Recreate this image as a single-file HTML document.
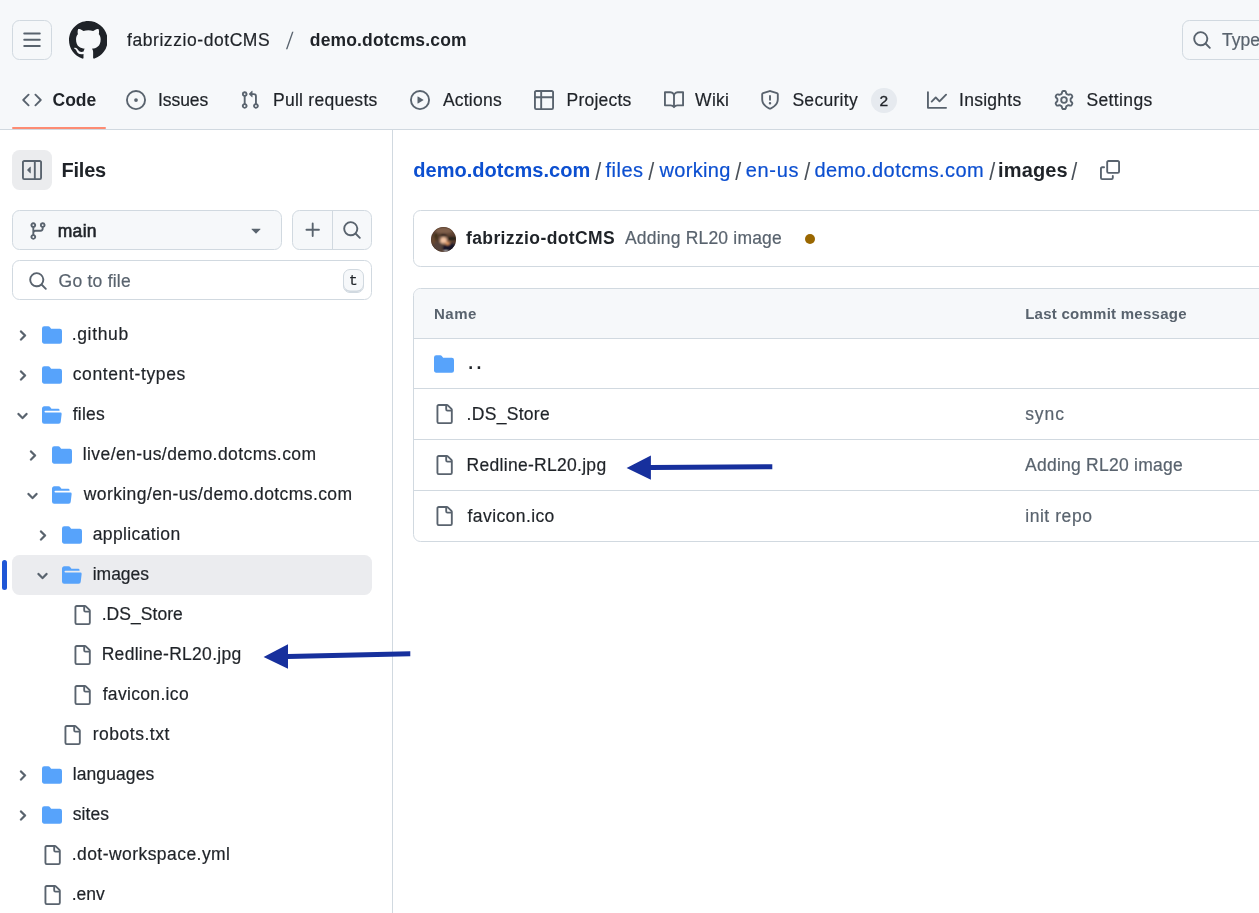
<!DOCTYPE html>
<html lang="en"><head><meta charset="utf-8"><title>demo.dotcms.com/files/working/en-us/demo.dotcms.com/images at main</title>
<style>
html,body{margin:0;padding:0;background:#fff;}
body{width:1259px;height:913px;position:relative;overflow:hidden;font-family:"Liberation Sans",sans-serif;-webkit-font-smoothing:antialiased;}
#root{position:absolute;left:0;top:0;width:1259px;height:913px;will-change:transform}
.b,.i,.t{position:absolute;display:block}
.t{white-space:nowrap;-webkit-text-stroke:0.2px currentColor}
</style></head><body><div id="root">
<div class="b" style="left:0px;top:0px;width:1259px;height:130px;background:#f6f8fa;border-bottom:1px solid #d1d9e0;box-sizing:border-box"></div>
<div class="b" style="left:12px;top:20px;width:40px;height:40px;border:1px solid #d1d9e0;border-radius:7.5px;box-sizing:border-box"></div>
<svg class="i" style="left:22px;top:30px" width="20" height="20" viewBox="0 0 16 16" fill="#59636e"><path d="M1 2.75A.75.75 0 0 1 1.75 2h12.5a.75.75 0 0 1 0 1.5H1.75A.75.75 0 0 1 1 2.75Zm0 5A.75.75 0 0 1 1.75 7h12.5a.75.75 0 0 1 0 1.5H1.75A.75.75 0 0 1 1 7.75ZM1.75 12h12.5a.75.75 0 0 1 0 1.5H1.75a.75.75 0 0 1 0-1.5Z"/></svg>
<svg class="i" style="left:68.6px;top:20.8px" width="38.6" height="38.6" viewBox="0 0 16 16" fill="#1f2328"><path d="M8 0c4.42 0 8 3.58 8 8a8.013 8.013 0 0 1-5.45 7.59c-.4.08-.55-.17-.55-.38 0-.27.01-1.13.01-2.2 0-.75-.25-1.23-.54-1.48 1.78-.2 3.65-.88 3.65-3.95 0-.88-.31-1.59-.82-2.15.08-.2.36-1.02-.08-2.12 0 0-.67-.22-2.2.82-.64-.18-1.32-.27-2-.27-.68 0-1.36.09-2 .27-1.53-1.03-2.2-.82-2.2-.82-.44 1.1-.16 1.92-.08 2.12-.51.56-.82 1.28-.82 2.15 0 3.06 1.86 3.75 3.64 3.95-.23.2-.44.55-.51 1.07-.46.21-1.61.55-2.33-.66-.15-.24-.6-.83-1.23-.82-.67.01-.27.38.01.53.34.19.73.9.82 1.13.16.45.68 1.31 2.69.94 0 .67.01 1.3.01 1.49 0 .21-.15.45-.55.38A7.995 7.995 0 0 1 0 8c0-4.42 3.58-8 8-8Z"/></svg>
<span id="t1" class="t" style="left:127.00px;top:30.00px;font-size:17.5px;line-height:20px;color:#1f2328;letter-spacing:0.564px;">fabrizzio-dotCMS</span>
<span id="t2" class="t" style="left:286.00px;top:30.00px;font-size:17.5px;line-height:20px;color:#59636e;-webkit-text-stroke:0;transform-origin:0 3.1px;transform:translate(2.7px,-2px) skewX(-8.4deg) scale(1.02,1.354);">/</span>
<span id="t3" class="t" style="left:309.80px;top:30.00px;font-size:17.5px;line-height:20px;color:#1f2328;font-weight:700;-webkit-text-stroke:0;letter-spacing:0.153px;">demo.dotcms.com</span>
<div class="b" style="left:1182px;top:20px;width:90px;height:40px;border:1px solid #d1d9e0;border-radius:7.5px;box-sizing:border-box"></div>
<svg class="i" style="left:1192px;top:30px" width="20" height="20" viewBox="0 0 16 16" fill="#59636e"><path d="M10.68 11.74a6 6 0 0 1-7.922-8.982 6 6 0 0 1 8.982 7.922l3.04 3.04a.749.749 0 0 1-.326 1.275.749.749 0 0 1-.734-.215ZM11.5 7a4.499 4.499 0 1 0-8.997 0A4.499 4.499 0 0 0 11.5 7Z"/></svg>
<span id="t4" class="t" style="left:1222.00px;top:30.00px;font-size:17.5px;line-height:20px;color:#59636e;">Type</span>
<div class="b" style="left:12px;top:126.5px;width:94px;height:2.5px;background:#fd8c73;border-radius:3px"></div>
<svg class="i" style="left:22px;top:90px" width="20" height="20" viewBox="0 0 16 16" fill="#59636e"><path d="m11.28 3.22 4.25 4.25a.75.75 0 0 1 0 1.06l-4.25 4.25a.749.749 0 0 1-1.275-.326.749.749 0 0 1 .215-.734L13.94 8l-3.72-3.72a.749.749 0 0 1 .326-1.275.749.749 0 0 1 .734.215Zm-6.56 0a.751.751 0 0 1 1.042.018.751.751 0 0 1 .018 1.042L2.06 8l3.72 3.72a.749.749 0 0 1-.326 1.275.749.749 0 0 1-.734-.215L.47 8.53a.75.75 0 0 1 0-1.06Z"/></svg>
<span id="t5" class="t" style="left:52.60px;top:90.00px;font-size:17.5px;line-height:20px;color:#1f2328;font-weight:700;-webkit-text-stroke:0;letter-spacing:-0.039px;">Code</span>
<svg class="i" style="left:126px;top:90px" width="20" height="20" viewBox="0 0 16 16" fill="#59636e"><path d="M8 9.5a1.5 1.5 0 1 0 0-3 1.5 1.5 0 0 0 0 3ZM8 0a8 8 0 1 1 0 16A8 8 0 0 1 8 0ZM1.5 8a6.5 6.5 0 1 0 13 0 6.5 6.5 0 0 0-13 0Z"/></svg>
<span id="t6" class="t" style="left:158.00px;top:90.00px;font-size:17.5px;line-height:20px;color:#1f2328;letter-spacing:-0.065px;">Issues</span>
<svg class="i" style="left:240px;top:90px" width="20" height="20" viewBox="0 0 16 16" fill="#59636e"><path d="M1.5 3.25a2.25 2.25 0 1 1 3 2.122v5.256a2.251 2.251 0 1 1-1.5 0V5.372A2.25 2.25 0 0 1 1.5 3.25Zm5.677-.177L9.573.677A.25.25 0 0 1 10 .854V2.5h1A2.5 2.5 0 0 1 13.5 5v5.628a2.251 2.251 0 1 1-1.5 0V5a1 1 0 0 0-1-1h-1v1.646a.25.25 0 0 1-.427.177L7.177 3.427a.25.25 0 0 1 0-.354ZM3.75 2.5a.75.75 0 1 0 0 1.5.75.75 0 0 0 0-1.5Zm0 9.5a.75.75 0 1 0 0 1.5.75.75 0 0 0 0-1.5Zm8.25.75a.75.75 0 1 0 1.5 0 .75.75 0 0 0-1.5 0Z"/></svg>
<span id="t7" class="t" style="left:273.00px;top:90.00px;font-size:17.5px;line-height:20px;color:#1f2328;letter-spacing:0.257px;">Pull requests</span>
<svg class="i" style="left:410px;top:90px" width="20" height="20" viewBox="0 0 16 16" fill="#59636e"><path d="M8 0a8 8 0 1 1 0 16A8 8 0 0 1 8 0ZM1.5 8a6.5 6.5 0 1 0 13 0 6.5 6.5 0 0 0-13 0Zm4.879-2.773 4.264 2.559a.25.25 0 0 1 0 .428l-4.264 2.559A.25.25 0 0 1 6 10.559V5.442a.25.25 0 0 1 .379-.215Z"/></svg>
<span id="t8" class="t" style="left:442.90px;top:90.00px;font-size:17.5px;line-height:20px;color:#1f2328;letter-spacing:0.227px;">Actions</span>
<svg class="i" style="left:534px;top:90px" width="20" height="20" viewBox="0 0 16 16" fill="#59636e"><path d="M0 1.75C0 .784.784 0 1.75 0h12.5C15.216 0 16 .784 16 1.75v12.5A1.75 1.75 0 0 1 14.25 16H1.75A1.75 1.75 0 0 1 0 14.25ZM6.5 6.5v8h7.75a.25.25 0 0 0 .25-.25V6.5Zm8-1.5V1.75a.25.25 0 0 0-.25-.25H6.5V5Zm-13 1.5v7.75c0 .138.112.25.25.25H5v-8ZM5 5V1.5H1.75a.25.25 0 0 0-.25.25V5Z"/></svg>
<span id="t9" class="t" style="left:566.60px;top:90.00px;font-size:17.5px;line-height:20px;color:#1f2328;letter-spacing:0.205px;">Projects</span>
<svg class="i" style="left:664px;top:90px" width="20" height="20" viewBox="0 0 16 16" fill="#59636e"><path d="M0 1.75A.75.75 0 0 1 .75 1h4.253c1.227 0 2.317.59 3 1.501A3.743 3.743 0 0 1 11.006 1h4.245a.75.75 0 0 1 .75.75v10.5a.75.75 0 0 1-.75.75h-4.507a2.25 2.25 0 0 0-1.591.659l-.622.621a.75.75 0 0 1-1.06 0l-.622-.621A2.25 2.25 0 0 0 5.258 13H.75a.75.75 0 0 1-.75-.75Zm7.251 10.324.004-5.073-.002-2.253A2.25 2.25 0 0 0 5.003 2.5H1.5v9h3.757a3.75 3.75 0 0 1 1.994.574ZM8.755 4.75l-.004 7.322a3.752 3.752 0 0 1 1.992-.572H14.5v-9h-3.495a2.25 2.25 0 0 0-2.25 2.25Z"/></svg>
<span id="t10" class="t" style="left:695.10px;top:90.00px;font-size:17.5px;line-height:20px;color:#1f2328;letter-spacing:0.282px;">Wiki</span>
<svg class="i" style="left:760px;top:90px" width="20" height="20" viewBox="0 0 16 16" fill="#59636e"><path d="M7.467.133a1.748 1.748 0 0 1 1.066 0l5.25 1.68A1.75 1.75 0 0 1 15 3.48V7c0 1.566-.32 3.182-1.303 4.682-.983 1.498-2.585 2.813-5.032 3.855a1.697 1.697 0 0 1-1.33 0c-2.447-1.042-4.049-2.357-5.032-3.855C1.32 10.182 1 8.566 1 7V3.48a1.75 1.75 0 0 1 1.217-1.667Zm.61 1.429a.25.25 0 0 0-.153 0l-5.25 1.68a.25.25 0 0 0-.174.238V7c0 1.358.275 2.666 1.057 3.86.784 1.194 2.121 2.34 4.366 3.297a.196.196 0 0 0 .154 0c2.245-.956 3.582-2.104 4.366-3.298C13.225 9.666 13.5 8.36 13.5 7V3.48a.251.251 0 0 0-.174-.237l-5.25-1.68ZM8.75 4.75v3a.75.75 0 0 1-1.5 0v-3a.75.75 0 0 1 1.5 0ZM9 10.5a1 1 0 1 1-2 0 1 1 0 0 1 2 0Z"/></svg>
<span id="t11" class="t" style="left:792.40px;top:90.00px;font-size:17.5px;line-height:20px;color:#1f2328;letter-spacing:0.291px;">Security</span>
<div class="b" style="left:871px;top:88px;width:25.5px;height:24.5px;background:#e6eaef;border-radius:13px"></div>
<span id="t12" class="t" style="left:879.50px;top:90.50px;font-size:15.5px;line-height:20px;color:#1f2328;-webkit-text-stroke:0.35px currentColor;">2</span>
<svg class="i" style="left:927px;top:90px" width="20" height="20" viewBox="0 0 16 16" fill="#59636e"><path d="M1.5 1.75V13.5h13.75a.75.75 0 0 1 0 1.5H.75a.75.75 0 0 1-.75-.75V1.75a.75.75 0 0 1 1.5 0Zm14.28 2.53-5.25 5.25a.75.75 0 0 1-1.06 0L7 7.06 4.28 9.78a.751.751 0 0 1-1.042-.018.751.751 0 0 1-.018-1.042l3.25-3.25a.75.75 0 0 1 1.06 0L10 7.94l4.72-4.72a.751.751 0 0 1 1.042.018.751.751 0 0 1 .018 1.042Z"/></svg>
<span id="t13" class="t" style="left:959.00px;top:90.00px;font-size:17.5px;line-height:20px;color:#1f2328;letter-spacing:0.278px;">Insights</span>
<svg class="i" style="left:1054px;top:90px" width="20" height="20" viewBox="0 0 16 16" fill="#59636e"><path d="M8 0a8.2 8.2 0 0 1 .701.031C9.444.095 9.99.645 10.16 1.29l.288 1.107c.018.066.079.158.212.224.231.114.454.243.668.386.123.082.233.09.299.071l1.103-.303c.644-.176 1.392.021 1.82.63.27.385.506.792.704 1.218.315.675.111 1.422-.364 1.891l-.814.806c-.049.048-.098.147-.088.294.016.257.016.515 0 .772-.01.147.038.246.088.294l.814.806c.475.469.679 1.216.364 1.891a7.977 7.977 0 0 1-.704 1.217c-.428.61-1.176.807-1.82.63l-1.102-.302c-.067-.019-.177-.011-.3.071a5.909 5.909 0 0 1-.668.386c-.133.066-.194.158-.211.224l-.29 1.106c-.168.646-.715 1.196-1.458 1.26a8.006 8.006 0 0 1-1.402 0c-.743-.064-1.289-.614-1.458-1.26l-.289-1.106c-.018-.066-.079-.158-.212-.224a5.738 5.738 0 0 1-.668-.386c-.123-.082-.233-.09-.299-.071l-1.103.303c-.644.176-1.392-.021-1.82-.63a8.12 8.12 0 0 1-.704-1.218c-.315-.675-.111-1.422.363-1.891l.815-.806c.05-.048.098-.147.088-.294a6.214 6.214 0 0 1 0-.772c.01-.147-.038-.246-.088-.294l-.815-.806C.635 6.045.431 5.298.746 4.623a7.920 7.920 0 0 1 .704-1.217c.428-.61 1.176-.807 1.820-.63l1.102.302c.067.019.177.011.3-.071.214-.143.437-.272.668-.386.133-.066.194-.158.211-.224l.29-1.106C6.009.645 6.556.095 7.299.03 7.530.01 7.764 0 8 0Zm-.571 1.525c-.036.003-.108.036-.137.146l-.289 1.105c-.147.561-.549.967-.998 1.189-.173.086-.34.183-.5.29-.417.278-.97.423-1.529.27l-1.103-.303c-.109-.03-.175.016-.195.045-.22.312-.412.644-.573.99-.014.031-.021.11.059.19l.815.806c.411.406.562.957.53 1.456a4.709 4.709 0 0 0 0 .582c.032.499-.119 1.05-.53 1.456l-.815.806c-.081.08-.073.159-.059.19.162.346.353.677.573.989.02.03.085.076.195.046l1.102-.303c.56-.153 1.113-.008 1.53.27.161.107.328.204.501.29.447.222.85.629.997 1.189l.289 1.105c.029.109.101.143.137.146a6.6 6.6 0 0 0 1.142 0c.036-.003.108-.036.137-.146l.289-1.105c.147-.561.549-.967.998-1.189.173-.086.34-.183.5-.29.417-.278.97-.423 1.529-.27l1.103.303c.109.029.175-.016.195-.045.22-.313.411-.644.573-.99.014-.031.021-.11-.059-.19l-.815-.806c-.411-.406-.562-.957-.53-1.456a4.709 4.709 0 0 0 0-.582c-.032-.499.119-1.05.53-1.456l.815-.806c.081-.08.073-.159.059-.19a6.464 6.464 0 0 0-.573-.989c-.02-.03-.085-.076-.195-.046l-1.102.303c-.56.153-1.113.008-1.53-.27a4.440 4.440 0 0 0-.501-.29c-.447-.222-.85-.629-.997-1.189l-.289-1.105c-.029-.11-.101-.143-.137-.146a6.6 6.6 0 0 0-1.142 0ZM11 8a3 3 0 1 1-6 0 3 3 0 0 1 6 0ZM9.5 8a1.5 1.5 0 1 0-3.001.001A1.5 1.5 0 0 0 9.500 8Z"/></svg>
<span id="t14" class="t" style="left:1086.40px;top:90.00px;font-size:17.5px;line-height:20px;color:#1f2328;letter-spacing:0.375px;">Settings</span>
<div class="b" style="left:392px;top:130px;width:1px;height:800px;background:#d1d9e0"></div>
<div class="b" style="left:12px;top:150px;width:40px;height:40px;background:#ebecee;border-radius:7.5px"></div>
<svg class="i" style="left:22px;top:160px" width="20" height="20" viewBox="0 0 16 16" fill="#59636e"><path d="m4.177 7.823 2.396-2.396A.25.25 0 0 1 7 5.604v4.792a.25.25 0 0 1-.427.177L4.177 8.177a.25.25 0 0 1 0-.354ZM0 1.75C0 .784.784 0 1.75 0h12.5C15.216 0 16 .784 16 1.75v12.5A1.75 1.75 0 0 1 14.25 16H1.75A1.75 1.75 0 0 1 0 14.250Zm1.750-.250a.250.250 0 0 0-.250.250v12.500c0 .138.112.250.250.250H9.500v-13Zm12.500 13a.250.250 0 0 0 .250-.250V1.750a.250.250 0 0 0-.250-.250H11v13Z"/></svg>
<span id="t15" class="t" style="left:61.60px;top:158.00px;font-size:20px;line-height:24px;color:#1f2328;font-weight:700;-webkit-text-stroke:0;letter-spacing:-0.263px;">Files</span>
<div class="b" style="left:12px;top:210px;width:270px;height:40px;background:#f6f8fa;border:1px solid #d1d9e0;border-radius:7.5px;box-sizing:border-box"></div>
<svg class="i" style="left:28px;top:221px" width="20" height="20" viewBox="0 0 16 16" fill="#59636e"><path d="M9.5 3.25a2.25 2.25 0 1 1 3 2.122V6A2.5 2.5 0 0 1 10 8.5H6a1 1 0 0 0-1 1v1.128a2.251 2.251 0 1 1-1.5 0V5.372a2.25 2.25 0 1 1 1.5 0v1.836A2.493 2.493 0 0 1 6 7h4a1 1 0 0 0 1-1v-.628A2.25 2.25 0 0 1 9.5 3.25Zm-6 0a.75.75 0 1 0 1.5 0 .75.75 0 0 0-1.5 0Zm8.25-.75a.75.75 0 1 0 0 1.5.75.75 0 0 0 0-1.5ZM4.25 12a.75.75 0 1 0 0 1.5.75.75 0 0 0 0-1.5Z"/></svg>
<span id="t16" class="t" style="left:57.70px;top:221.00px;font-size:17.5px;line-height:20px;color:#1f2328;letter-spacing:0.314px;-webkit-text-stroke:0.6px #1f2328;">main</span>
<svg class="i" style="left:246px;top:220.3px" width="20" height="20" viewBox="0 0 16 16" fill="#59636e"><path d="m4.427 7.427 3.396 3.396a.25.25 0 0 0 .354 0l3.396-3.396A.25.25 0 0 0 11.396 7H4.604a.25.25 0 0 0-.177.427Z"/></svg>
<div class="b" style="left:292px;top:210px;width:80px;height:40px;background:#f6f8fa;border:1px solid #d1d9e0;border-radius:7.5px;box-sizing:border-box"></div>
<div class="b" style="left:332px;top:211px;width:1px;height:38px;background:#d1d9e0"></div>
<svg class="i" style="left:302.5px;top:220px" width="20" height="20" viewBox="0 0 16 16" fill="#59636e"><path d="M7.75 2a.75.75 0 0 1 .75.75V7h4.25a.75.75 0 0 1 0 1.5H8.5v4.25a.75.75 0 0 1-1.5 0V8.5H2.75a.75.75 0 0 1 0-1.5H7V2.75A.75.75 0 0 1 7.75 2Z"/></svg>
<svg class="i" style="left:342px;top:220px" width="20" height="20" viewBox="0 0 16 16" fill="#59636e"><path d="M10.68 11.74a6 6 0 0 1-7.922-8.982 6 6 0 0 1 8.982 7.922l3.04 3.04a.749.749 0 0 1-.326 1.275.749.749 0 0 1-.734-.215ZM11.5 7a4.499 4.499 0 1 0-8.997 0A4.499 4.499 0 0 0 11.5 7Z"/></svg>
<div class="b" style="left:12px;top:260px;width:360px;height:40px;background:#fff;border:1px solid #d1d9e0;border-radius:7.5px;box-sizing:border-box"></div>
<svg class="i" style="left:28px;top:271px" width="20" height="20" viewBox="0 0 16 16" fill="#59636e"><path d="M10.68 11.74a6 6 0 0 1-7.922-8.982 6 6 0 0 1 8.982 7.922l3.04 3.04a.749.749 0 0 1-.326 1.275.749.749 0 0 1-.734-.215ZM11.5 7a4.499 4.499 0 1 0-8.997 0A4.499 4.499 0 0 0 11.5 7Z"/></svg>
<span id="t17" class="t" style="left:58.60px;top:271.00px;font-size:17.5px;line-height:20px;color:#59636e;letter-spacing:0.233px;">Go to file</span>
<div class="b" style="left:343px;top:269px;width:20.5px;height:23.5px;background:#f6f8fa;border:1px solid #d1d9e0;border-radius:7px;box-sizing:border-box;box-shadow:inset 0 -1.5px 0 #d1d9e0"></div>
<span id="t18" class="t" style="left:348.80px;top:272.00px;font-size:15px;line-height:20px;color:#1f2328;font-family:'Liberation Mono',monospace;">t</span>
<svg class="i" style="left:15px;top:327.5px" width="15" height="15" viewBox="0 0 12 12" fill="#59636e" stroke="#59636e" stroke-width="0.25"><path d="M4.7 10c-.2 0-.4-.1-.5-.2-.3-.3-.3-.8 0-1.1L6.9 6 4.2 3.300c-.3-.3-.3-.8 0-1.100.3-.3.8-.3 1.100 0l3.300 3.200c.3.3.3.8 0 1.100L5.300 9.700c-.2.200-.4.300-.6.300Z"/></svg>
<svg class="i" style="left:42px;top:325px" width="20" height="20" viewBox="0 0 16 16" fill="#57a3fb"><path d="M1.75 1A1.75 1.75 0 0 0 0 2.75v10.5C0 14.216.784 15 1.75 15h12.5A1.75 1.75 0 0 0 16 13.25v-8.5A1.75 1.75 0 0 0 14.25 3H7.5a.25.25 0 0 1-.2-.1l-.9-1.2C6.07 1.26 5.55 1 5 1H1.75Z"/></svg>
<span id="t19" class="t" style="left:71.70px;top:324.00px;font-size:17.5px;line-height:20px;color:#1f2328;letter-spacing:0.665px;">.github</span>
<svg class="i" style="left:15px;top:367.5px" width="15" height="15" viewBox="0 0 12 12" fill="#59636e" stroke="#59636e" stroke-width="0.25"><path d="M4.7 10c-.2 0-.4-.1-.5-.2-.3-.3-.3-.8 0-1.1L6.9 6 4.2 3.300c-.3-.3-.3-.8 0-1.100.3-.3.8-.3 1.100 0l3.300 3.200c.3.3.3.8 0 1.100L5.300 9.700c-.2.200-.4.300-.6.300Z"/></svg>
<svg class="i" style="left:42px;top:365px" width="20" height="20" viewBox="0 0 16 16" fill="#57a3fb"><path d="M1.75 1A1.75 1.75 0 0 0 0 2.75v10.5C0 14.216.784 15 1.75 15h12.5A1.75 1.75 0 0 0 16 13.25v-8.5A1.75 1.75 0 0 0 14.25 3H7.5a.25.25 0 0 1-.2-.1l-.9-1.2C6.07 1.26 5.55 1 5 1H1.75Z"/></svg>
<span id="t20" class="t" style="left:72.70px;top:364.00px;font-size:17.5px;line-height:20px;color:#1f2328;letter-spacing:0.624px;">content-types</span>
<svg class="i" style="left:15px;top:407.5px" width="15" height="15" viewBox="0 0 12 12" fill="#59636e" stroke="#59636e" stroke-width="0.25"><path d="M6 8.825c-.2 0-.4-.1-.5-.2l-3.300-3.300c-.3-.3-.3-.8 0-1.100.3-.3.8-.3 1.100 0l2.700 2.700 2.700-2.700c.3-.3.8-.3 1.100 0 .3.300.3.800 0 1.100l-3.200 3.200c-.2.200-.4.300-.6.300Z"/></svg>
<svg class="i" style="left:42px;top:405px" width="20" height="20" viewBox="0 0 16 16" fill="#57a3fb"><path d="M.513 1.513A1.75 1.75 0 0 1 1.75 1h3.5c.55 0 1.07.26 1.4.7l.9 1.2a.25.25 0 0 0 .2.1H13a1 1 0 0 1 1 1v.5H2.75a.75.75 0 0 0 0 1.5h11.978a1 1 0 0 1 .994 1.117L15 13.25A1.75 1.75 0 0 1 13.25 15H1.75A1.75 1.75 0 0 1 0 13.25V2.75c0-.464.184-.91.513-1.237Z"/></svg>
<span id="t21" class="t" style="left:72.70px;top:404.00px;font-size:17.5px;line-height:20px;color:#1f2328;letter-spacing:0.257px;">files</span>
<svg class="i" style="left:25px;top:447.5px" width="15" height="15" viewBox="0 0 12 12" fill="#59636e" stroke="#59636e" stroke-width="0.25"><path d="M4.7 10c-.2 0-.4-.1-.5-.2-.3-.3-.3-.8 0-1.1L6.9 6 4.2 3.300c-.3-.3-.3-.8 0-1.100.3-.3.8-.3 1.100 0l3.300 3.200c.3.3.3.8 0 1.100L5.300 9.700c-.2.200-.4.300-.6.300Z"/></svg>
<svg class="i" style="left:52px;top:445px" width="20" height="20" viewBox="0 0 16 16" fill="#57a3fb"><path d="M1.75 1A1.75 1.75 0 0 0 0 2.75v10.5C0 14.216.784 15 1.75 15h12.5A1.75 1.75 0 0 0 16 13.25v-8.5A1.75 1.75 0 0 0 14.25 3H7.5a.25.25 0 0 1-.2-.1l-.9-1.2C6.07 1.26 5.55 1 5 1H1.75Z"/></svg>
<span id="t22" class="t" style="left:82.70px;top:444.00px;font-size:17.5px;line-height:20px;color:#1f2328;letter-spacing:0.426px;">live/en-us/demo.dotcms.com</span>
<svg class="i" style="left:25px;top:487.5px" width="15" height="15" viewBox="0 0 12 12" fill="#59636e" stroke="#59636e" stroke-width="0.25"><path d="M6 8.825c-.2 0-.4-.1-.5-.2l-3.300-3.300c-.3-.3-.3-.8 0-1.100.3-.3.8-.3 1.100 0l2.700 2.700 2.700-2.700c.3-.3.8-.3 1.100 0 .3.300.3.800 0 1.100l-3.200 3.200c-.2.200-.4.300-.6.300Z"/></svg>
<svg class="i" style="left:52px;top:485px" width="20" height="20" viewBox="0 0 16 16" fill="#57a3fb"><path d="M.513 1.513A1.75 1.75 0 0 1 1.75 1h3.5c.55 0 1.07.26 1.4.7l.9 1.2a.25.25 0 0 0 .2.1H13a1 1 0 0 1 1 1v.5H2.75a.75.75 0 0 0 0 1.5h11.978a1 1 0 0 1 .994 1.117L15 13.25A1.75 1.75 0 0 1 13.25 15H1.75A1.75 1.75 0 0 1 0 13.25V2.75c0-.464.184-.91.513-1.237Z"/></svg>
<span id="t23" class="t" style="left:83.70px;top:484.00px;font-size:17.5px;line-height:20px;color:#1f2328;letter-spacing:0.414px;">working/en-us/demo.dotcms.com</span>
<svg class="i" style="left:35px;top:527.5px" width="15" height="15" viewBox="0 0 12 12" fill="#59636e" stroke="#59636e" stroke-width="0.25"><path d="M4.7 10c-.2 0-.4-.1-.5-.2-.3-.3-.3-.8 0-1.1L6.9 6 4.2 3.300c-.3-.3-.3-.8 0-1.100.3-.3.8-.3 1.100 0l3.300 3.200c.3.3.3.8 0 1.100L5.300 9.700c-.2.200-.4.300-.6.300Z"/></svg>
<svg class="i" style="left:62px;top:525px" width="20" height="20" viewBox="0 0 16 16" fill="#57a3fb"><path d="M1.75 1A1.75 1.75 0 0 0 0 2.75v10.5C0 14.216.784 15 1.75 15h12.5A1.75 1.75 0 0 0 16 13.25v-8.5A1.75 1.75 0 0 0 14.25 3H7.5a.25.25 0 0 1-.2-.1l-.9-1.2C6.07 1.26 5.55 1 5 1H1.75Z"/></svg>
<span id="t24" class="t" style="left:92.70px;top:524.00px;font-size:17.5px;line-height:20px;color:#1f2328;letter-spacing:0.386px;">application</span>
<div class="b" style="left:12px;top:555px;width:360px;height:40px;background:#ebecef;border-radius:7.5px"></div>
<div class="b" style="left:2px;top:560px;width:5px;height:30px;background:#1f56d6;border-radius:3px"></div>
<svg class="i" style="left:35px;top:567.5px" width="15" height="15" viewBox="0 0 12 12" fill="#59636e" stroke="#59636e" stroke-width="0.25"><path d="M6 8.825c-.2 0-.4-.1-.5-.2l-3.300-3.300c-.3-.3-.3-.8 0-1.100.3-.3.8-.3 1.100 0l2.700 2.700 2.700-2.700c.3-.3.8-.3 1.100 0 .3.300.3.800 0 1.100l-3.200 3.200c-.2.200-.4.300-.6.300Z"/></svg>
<svg class="i" style="left:62px;top:565px" width="20" height="20" viewBox="0 0 16 16" fill="#57a3fb"><path d="M.513 1.513A1.75 1.75 0 0 1 1.75 1h3.5c.55 0 1.07.26 1.4.7l.9 1.2a.25.25 0 0 0 .2.1H13a1 1 0 0 1 1 1v.5H2.75a.75.75 0 0 0 0 1.5h11.978a1 1 0 0 1 .994 1.117L15 13.25A1.75 1.75 0 0 1 13.25 15H1.75A1.75 1.75 0 0 1 0 13.25V2.75c0-.464.184-.91.513-1.237Z"/></svg>
<span id="t25" class="t" style="left:92.70px;top:564.00px;font-size:17.5px;line-height:20px;color:#1f2328;letter-spacing:-0.013px;">images</span>
<svg class="i" style="left:72px;top:605px" width="20" height="20" viewBox="0 0 16 16" fill="#59636e"><path d="M2 1.75C2 .784 2.784 0 3.75 0h6.586c.464 0 .909.184 1.237.513l2.914 2.914c.329.328.513.773.513 1.237v9.586A1.75 1.75 0 0 1 13.25 16h-9.5A1.75 1.75 0 0 1 2 14.25Zm1.75-.25a.25.25 0 0 0-.25.25v12.5c0 .138.112.25.25.25h9.5a.25.25 0 0 0 .25-.25V6h-2.750A1.750 1.750 0 0 1 9 4.250V1.500Zm6.750.062V4.250c0 .138.112.250.250.250h2.688l-.011-.013-2.914-2.914-.013-.011Z"/></svg>
<span id="t26" class="t" style="left:101.70px;top:604.00px;font-size:17.5px;line-height:20px;color:#1f2328;letter-spacing:0.050px;">.DS_Store</span>
<svg class="i" style="left:72px;top:645px" width="20" height="20" viewBox="0 0 16 16" fill="#59636e"><path d="M2 1.75C2 .784 2.784 0 3.75 0h6.586c.464 0 .909.184 1.237.513l2.914 2.914c.329.328.513.773.513 1.237v9.586A1.75 1.75 0 0 1 13.25 16h-9.5A1.75 1.75 0 0 1 2 14.25Zm1.75-.25a.25.25 0 0 0-.25.25v12.5c0 .138.112.25.25.25h9.5a.25.25 0 0 0 .25-.25V6h-2.750A1.750 1.750 0 0 1 9 4.250V1.500Zm6.750.062V4.250c0 .138.112.250.250.250h2.688l-.011-.013-2.914-2.914-.013-.011Z"/></svg>
<span id="t27" class="t" style="left:101.70px;top:644.00px;font-size:17.5px;line-height:20px;color:#1f2328;letter-spacing:0.287px;">Redline-RL20.jpg</span>
<svg class="i" style="left:72px;top:685px" width="20" height="20" viewBox="0 0 16 16" fill="#59636e"><path d="M2 1.75C2 .784 2.784 0 3.75 0h6.586c.464 0 .909.184 1.237.513l2.914 2.914c.329.328.513.773.513 1.237v9.586A1.75 1.75 0 0 1 13.25 16h-9.5A1.75 1.75 0 0 1 2 14.25Zm1.75-.25a.25.25 0 0 0-.25.25v12.5c0 .138.112.25.25.25h9.5a.25.25 0 0 0 .25-.25V6h-2.750A1.750 1.750 0 0 1 9 4.250V1.500Zm6.750.062V4.250c0 .138.112.250.250.250h2.688l-.011-.013-2.914-2.914-.013-.011Z"/></svg>
<span id="t28" class="t" style="left:102.70px;top:684.00px;font-size:17.5px;line-height:20px;color:#1f2328;letter-spacing:0.325px;">favicon.ico</span>
<svg class="i" style="left:62px;top:725px" width="20" height="20" viewBox="0 0 16 16" fill="#59636e"><path d="M2 1.75C2 .784 2.784 0 3.75 0h6.586c.464 0 .909.184 1.237.513l2.914 2.914c.329.328.513.773.513 1.237v9.586A1.75 1.75 0 0 1 13.25 16h-9.5A1.75 1.75 0 0 1 2 14.25Zm1.75-.25a.25.25 0 0 0-.25.25v12.5c0 .138.112.25.25.25h9.5a.25.25 0 0 0 .25-.25V6h-2.750A1.750 1.750 0 0 1 9 4.250V1.500Zm6.750.062V4.250c0 .138.112.250.250.250h2.688l-.011-.013-2.914-2.914-.013-.011Z"/></svg>
<span id="t29" class="t" style="left:92.70px;top:724.00px;font-size:17.5px;line-height:20px;color:#1f2328;letter-spacing:0.520px;">robots.txt</span>
<svg class="i" style="left:15px;top:767.5px" width="15" height="15" viewBox="0 0 12 12" fill="#59636e" stroke="#59636e" stroke-width="0.25"><path d="M4.7 10c-.2 0-.4-.1-.5-.2-.3-.3-.3-.8 0-1.1L6.9 6 4.2 3.300c-.3-.3-.3-.8 0-1.100.3-.3.8-.3 1.100 0l3.300 3.200c.3.3.3.8 0 1.100L5.300 9.700c-.2.200-.4.300-.6.300Z"/></svg>
<svg class="i" style="left:42px;top:765px" width="20" height="20" viewBox="0 0 16 16" fill="#57a3fb"><path d="M1.75 1A1.75 1.75 0 0 0 0 2.75v10.5C0 14.216.784 15 1.75 15h12.5A1.75 1.75 0 0 0 16 13.25v-8.5A1.75 1.75 0 0 0 14.25 3H7.5a.25.25 0 0 1-.2-.1l-.9-1.2C6.07 1.26 5.55 1 5 1H1.75Z"/></svg>
<span id="t30" class="t" style="left:72.70px;top:764.00px;font-size:17.5px;line-height:20px;color:#1f2328;letter-spacing:0.097px;">languages</span>
<svg class="i" style="left:15px;top:807.5px" width="15" height="15" viewBox="0 0 12 12" fill="#59636e" stroke="#59636e" stroke-width="0.25"><path d="M4.7 10c-.2 0-.4-.1-.5-.2-.3-.3-.3-.8 0-1.1L6.9 6 4.2 3.300c-.3-.3-.3-.8 0-1.100.3-.3.8-.3 1.100 0l3.300 3.200c.3.3.3.8 0 1.100L5.300 9.700c-.2.200-.4.300-.6.300Z"/></svg>
<svg class="i" style="left:42px;top:805px" width="20" height="20" viewBox="0 0 16 16" fill="#57a3fb"><path d="M1.75 1A1.75 1.75 0 0 0 0 2.75v10.5C0 14.216.784 15 1.75 15h12.5A1.75 1.75 0 0 0 16 13.25v-8.5A1.75 1.75 0 0 0 14.25 3H7.5a.25.25 0 0 1-.2-.1l-.9-1.2C6.07 1.26 5.55 1 5 1H1.75Z"/></svg>
<span id="t31" class="t" style="left:72.70px;top:804.00px;font-size:17.5px;line-height:20px;color:#1f2328;letter-spacing:0.092px;">sites</span>
<svg class="i" style="left:42px;top:845px" width="20" height="20" viewBox="0 0 16 16" fill="#59636e"><path d="M2 1.75C2 .784 2.784 0 3.75 0h6.586c.464 0 .909.184 1.237.513l2.914 2.914c.329.328.513.773.513 1.237v9.586A1.75 1.75 0 0 1 13.25 16h-9.5A1.75 1.75 0 0 1 2 14.25Zm1.75-.25a.25.25 0 0 0-.25.25v12.5c0 .138.112.25.25.25h9.5a.25.25 0 0 0 .25-.25V6h-2.750A1.750 1.750 0 0 1 9 4.250V1.500Zm6.750.062V4.250c0 .138.112.250.250.250h2.688l-.011-.013-2.914-2.914-.013-.011Z"/></svg>
<span id="t32" class="t" style="left:71.70px;top:844.00px;font-size:17.5px;line-height:20px;color:#1f2328;letter-spacing:0.445px;">.dot-workspace.yml</span>
<svg class="i" style="left:42px;top:885px" width="20" height="20" viewBox="0 0 16 16" fill="#59636e"><path d="M2 1.75C2 .784 2.784 0 3.75 0h6.586c.464 0 .909.184 1.237.513l2.914 2.914c.329.328.513.773.513 1.237v9.586A1.75 1.75 0 0 1 13.25 16h-9.5A1.75 1.75 0 0 1 2 14.25Zm1.75-.25a.25.25 0 0 0-.25.25v12.5c0 .138.112.25.25.25h9.5a.25.25 0 0 0 .25-.25V6h-2.750A1.750 1.750 0 0 1 9 4.250V1.500Zm6.750.062V4.250c0 .138.112.250.250.250h2.688l-.011-.013-2.914-2.914-.013-.011Z"/></svg>
<span id="t33" class="t" style="left:71.70px;top:884.00px;font-size:17.5px;line-height:20px;color:#1f2328;letter-spacing:0.024px;">.env</span>
<span id="t34" class="t" style="left:413.30px;top:158.00px;font-size:20px;line-height:24px;color:#0c4fd0;font-weight:700;-webkit-text-stroke:0;letter-spacing:0.013px;">demo.dotcms.com</span>
<span id="t35" class="t" style="left:595.00px;top:158.00px;font-size:20px;line-height:24px;color:#59636e;-webkit-text-stroke:0;color:#4a5159;transform-origin:0 4.1px;transform:translateX(0.2px) scale(1.08,1.23);">/</span>
<span id="t36" class="t" style="left:605.60px;top:158.00px;font-size:20px;line-height:24px;color:#0c4fd0;letter-spacing:0.458px;">files</span>
<span id="t37" class="t" style="left:648.10px;top:158.00px;font-size:20px;line-height:24px;color:#59636e;-webkit-text-stroke:0;color:#4a5159;transform-origin:0 4.1px;transform:translateX(0.2px) scale(1.08,1.23);">/</span>
<span id="t38" class="t" style="left:659.60px;top:158.00px;font-size:20px;line-height:24px;color:#0c4fd0;letter-spacing:0.301px;">working</span>
<span id="t39" class="t" style="left:735.00px;top:158.00px;font-size:20px;line-height:24px;color:#59636e;-webkit-text-stroke:0;color:#4a5159;transform-origin:0 4.1px;transform:translateX(0.2px) scale(1.08,1.23);">/</span>
<span id="t40" class="t" style="left:745.80px;top:158.00px;font-size:20px;line-height:24px;color:#0c4fd0;letter-spacing:0.643px;">en-us</span>
<span id="t41" class="t" style="left:804.00px;top:158.00px;font-size:20px;line-height:24px;color:#59636e;-webkit-text-stroke:0;color:#4a5159;transform-origin:0 4.1px;transform:translateX(0.2px) scale(1.08,1.23);">/</span>
<span id="t42" class="t" style="left:814.40px;top:158.00px;font-size:20px;line-height:24px;color:#0c4fd0;letter-spacing:0.419px;">demo.dotcms.com</span>
<span id="t43" class="t" style="left:989.00px;top:158.00px;font-size:20px;line-height:24px;color:#59636e;-webkit-text-stroke:0;color:#4a5159;transform-origin:0 4.1px;transform:translateX(0.2px) scale(1.08,1.23);">/</span>
<span id="t44" class="t" style="left:998.00px;top:158.00px;font-size:20px;line-height:24px;color:#1f2328;font-weight:700;-webkit-text-stroke:0;letter-spacing:0.159px;">images</span>
<span id="t45" class="t" style="left:1071.40px;top:158.00px;font-size:20px;line-height:24px;color:#59636e;-webkit-text-stroke:0;color:#4a5159;transform-origin:0 4.1px;transform:translateX(0.2px) scale(1.08,1.23);">/</span>
<svg class="i" style="left:1100px;top:160px" width="20" height="20" viewBox="0 0 16 16" fill="#59636e"><path d="M0 6.75C0 5.784.784 5 1.75 5h1.5a.75.75 0 0 1 0 1.5h-1.5a.25.25 0 0 0-.25.25v7.5c0 .138.112.25.25.25h7.5a.25.25 0 0 0 .25-.25v-1.5a.75.75 0 0 1 1.5 0v1.5A1.75 1.75 0 0 1 9.25 16h-7.5A1.75 1.75 0 0 1 0 14.25ZM5 1.75C5 .784 5.784 0 6.75 0h7.5C15.216 0 16 .784 16 1.75v7.5A1.75 1.75 0 0 1 14.25 11h-7.5A1.75 1.75 0 0 1 5 9.25Zm1.75-.25a.25.25 0 0 0-.25.25v7.5c0 .138.112.25.25.25h7.5a.25.25 0 0 0 .25-.25v-7.5a.25.25 0 0 0-.25-.25Z"/></svg>
<div class="b" style="left:413px;top:210px;width:900px;height:56.5px;border:1px solid #d1d9e0;border-radius:7.5px;box-sizing:border-box;background:#fff"></div>
<svg class="i" style="left:431px;top:227px" width="25" height="25" viewBox="0 0 100 100"><defs><clipPath id="av"><circle cx="50" cy="50" r="50"/></clipPath><filter id="bl" x="-20%" y="-20%" width="140%" height="140%"><feGaussianBlur stdDeviation="3.2"/></filter></defs><g clip-path="url(#av)"><rect width="100" height="100" fill="#5e4334"/><g filter="url(#bl)"><ellipse cx="52" cy="14" rx="36" ry="13" fill="#80614c"/><ellipse cx="26" cy="78" rx="26" ry="20" fill="#54423b"/><ellipse cx="20" cy="40" rx="7" ry="16" fill="#3f2f18"/><ellipse cx="10" cy="55" rx="8" ry="14" fill="#6a4a30"/><ellipse cx="84" cy="46" rx="20" ry="7" fill="#241b12"/><ellipse cx="76" cy="84" rx="30" ry="19" fill="#17182a"/><ellipse cx="50" cy="53" rx="14" ry="13" fill="#f2c3a2"/><ellipse cx="66" cy="65" rx="9" ry="7" fill="#e59a63"/><ellipse cx="50" cy="33" rx="14" ry="6" fill="#170d08"/><ellipse cx="60" cy="99" rx="9" ry="4" fill="#f0f0f8"/></g></g><circle cx="50" cy="50" r="49" fill="none" stroke="rgba(60,30,15,.45)" stroke-width="2"/></svg>
<span id="t46" class="t" style="left:466.00px;top:228.00px;font-size:17.5px;line-height:20px;color:#1f2328;font-weight:700;-webkit-text-stroke:0;letter-spacing:0.385px;">fabrizzio-dotCMS</span>
<span id="t47" class="t" style="left:625.00px;top:228.00px;font-size:17.5px;line-height:20px;color:#59636e;letter-spacing:0.189px;">Adding RL20 image</span>
<div class="b" style="left:805px;top:233.5px;width:10px;height:10px;background:#9a6700;border-radius:50%"></div>
<div class="b" style="left:413px;top:287.5px;width:900px;height:254.5px;border:1px solid #d1d9e0;border-radius:7.5px;box-sizing:border-box;background:#fff"></div>
<div class="b" style="left:414px;top:288.5px;width:899px;height:50px;background:#f6f8fa;border-bottom:1px solid #d1d9e0;border-top-left-radius:7px;box-sizing:border-box"></div>
<span id="t48" class="t" style="left:434.00px;top:303.50px;font-size:15px;line-height:20px;color:#59636e;font-weight:700;-webkit-text-stroke:0;letter-spacing:0.496px;">Name</span>
<span id="t49" class="t" style="left:1025.20px;top:303.50px;font-size:15px;line-height:20px;color:#59636e;font-weight:700;-webkit-text-stroke:0;letter-spacing:0.256px;">Last commit message</span>
<div class="b" style="left:414px;top:388px;width:899px;height:1px;background:#d1d9e0"></div>
<div class="b" style="left:414px;top:439px;width:899px;height:1px;background:#d1d9e0"></div>
<div class="b" style="left:414px;top:490px;width:899px;height:1px;background:#d1d9e0"></div>
<svg class="i" style="left:434px;top:354px" width="20" height="20" viewBox="0 0 16 16" fill="#57a3fb"><path d="M1.75 1A1.75 1.75 0 0 0 0 2.75v10.5C0 14.216.784 15 1.75 15h12.5A1.75 1.75 0 0 0 16 13.25v-8.5A1.75 1.75 0 0 0 14.25 3H7.5a.25.25 0 0 1-.2-.1l-.9-1.2C6.07 1.26 5.55 1 5 1H1.75Z"/></svg>
<span id="t50" class="t" style="left:468.20px;top:353.00px;font-size:17.5px;line-height:20px;color:#1f2328;font-weight:700;-webkit-text-stroke:0;letter-spacing:-0.75px;">. .</span>
<svg class="i" style="left:434px;top:404px" width="20" height="20" viewBox="0 0 16 16" fill="#59636e"><path d="M2 1.75C2 .784 2.784 0 3.75 0h6.586c.464 0 .909.184 1.237.513l2.914 2.914c.329.328.513.773.513 1.237v9.586A1.75 1.75 0 0 1 13.25 16h-9.5A1.75 1.75 0 0 1 2 14.25Zm1.75-.25a.25.25 0 0 0-.25.25v12.5c0 .138.112.25.25.25h9.5a.25.25 0 0 0 .25-.25V6h-2.750A1.750 1.750 0 0 1 9 4.250V1.500Zm6.750.062V4.250c0 .138.112.250.250.250h2.688l-.011-.013-2.914-2.914-.013-.011Z"/></svg>
<span id="t51" class="t" style="left:466.60px;top:404.00px;font-size:17.5px;line-height:20px;color:#1f2328;letter-spacing:0.300px;">.DS_Store</span>
<span id="t52" class="t" style="left:1025.20px;top:404.00px;font-size:17.5px;line-height:20px;color:#59636e;letter-spacing:0.923px;">sync</span>
<svg class="i" style="left:434px;top:455px" width="20" height="20" viewBox="0 0 16 16" fill="#59636e"><path d="M2 1.75C2 .784 2.784 0 3.75 0h6.586c.464 0 .909.184 1.237.513l2.914 2.914c.329.328.513.773.513 1.237v9.586A1.75 1.75 0 0 1 13.25 16h-9.5A1.75 1.75 0 0 1 2 14.25Zm1.75-.25a.25.25 0 0 0-.25.25v12.5c0 .138.112.25.25.25h9.5a.25.25 0 0 0 .25-.25V6h-2.750A1.750 1.750 0 0 1 9 4.250V1.500Zm6.750.062V4.250c0 .138.112.250.250.250h2.688l-.011-.013-2.914-2.914-.013-.011Z"/></svg>
<span id="t53" class="t" style="left:466.60px;top:455.00px;font-size:17.5px;line-height:20px;color:#1f2328;letter-spacing:0.287px;">Redline-RL20.jpg</span>
<span id="t54" class="t" style="left:1025.00px;top:455.00px;font-size:17.5px;line-height:20px;color:#59636e;letter-spacing:0.251px;">Adding RL20 image</span>
<svg class="i" style="left:434px;top:506px" width="20" height="20" viewBox="0 0 16 16" fill="#59636e"><path d="M2 1.75C2 .784 2.784 0 3.75 0h6.586c.464 0 .909.184 1.237.513l2.914 2.914c.329.328.513.773.513 1.237v9.586A1.75 1.75 0 0 1 13.25 16h-9.5A1.75 1.75 0 0 1 2 14.25Zm1.75-.25a.25.25 0 0 0-.25.25v12.5c0 .138.112.25.25.25h9.5a.25.25 0 0 0 .25-.25V6h-2.750A1.750 1.750 0 0 1 9 4.250V1.500Zm6.750.062V4.250c0 .138.112.250.250.250h2.688l-.011-.013-2.914-2.914-.013-.011Z"/></svg>
<span id="t55" class="t" style="left:467.60px;top:506.00px;font-size:17.5px;line-height:20px;color:#1f2328;letter-spacing:0.405px;">favicon.ico</span>
<span id="t56" class="t" style="left:1025.20px;top:506.00px;font-size:17.5px;line-height:20px;color:#59636e;letter-spacing:0.559px;">init repo</span>
<svg class="i" style="left:0;top:0" width="1259" height="913" viewBox="0 0 1259 913"><g fill="#17309d" stroke="none"><polygon points="626.6,467.9 650.9,455.4 650.9,465 772.3,464.3 772.3,469.2 650.9,470.1 650.9,479.8"/><polygon points="263.6,656.9 288,644.2 288,654.1 410.3,651.3 410.3,656.2 288,659.1 288,668.7"/></g></svg>
</div></body></html>
